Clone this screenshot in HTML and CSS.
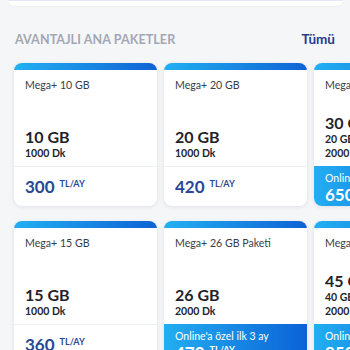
FILE: index.html
```html
<!DOCTYPE html>
<html lang="tr">
<head>
<meta charset="utf-8">
<title>Avantajlı Ana Paketler</title>
<link rel="stylesheet" href="styles.css">
</head>
<body>
<div class="top-strip"></div>
<header class="section-head">
  <h2 class="section-title">AVANTAJLI ANA PAKETLER</h2>
  <a class="see-all" href="#">Tümü</a>
</header>
<div class="grid">
  <div class="card">
    <div class="bar"></div>
    <div class="body">
      <div class="name">Mega+ 10 GB</div>
      <div class="specs">
        <div class="gb">10 GB</div>
        <div class="sub">1000 Dk</div>
      </div>
    </div>
    <div class="footer"><div class="price">300<sup class="unit">TL/AY</sup></div></div>
  </div>
  <div class="card">
    <div class="bar"></div>
    <div class="body">
      <div class="name">Mega+ 20 GB</div>
      <div class="specs">
        <div class="gb">20 GB</div>
        <div class="sub">1000 Dk</div>
      </div>
    </div>
    <div class="footer"><div class="price">420<sup class="unit">TL/AY</sup></div></div>
  </div>
  <div class="card">
    <div class="bar"></div>
    <div class="body">
      <div class="name">Mega+ 30 GB</div>
      <div class="specs">
        <div class="gb">30 GB</div>
        <div class="sub">20 GB + 10 GB Hediye</div>
        <div class="sub">2000 Dk</div>
      </div>
    </div>
    <div class="footer promo"><div class="promo-text">Online'a özel ilk 3 ay</div><div class="price">650<sup class="unit">TL/AY</sup></div></div>
  </div>
  <div class="card">
    <div class="bar"></div>
    <div class="body">
      <div class="name">Mega+ 15 GB</div>
      <div class="specs">
        <div class="gb">15 GB</div>
        <div class="sub">1000 Dk</div>
      </div>
    </div>
    <div class="footer"><div class="price">360<sup class="unit">TL/AY</sup></div></div>
  </div>
  <div class="card">
    <div class="bar"></div>
    <div class="body">
      <div class="name">Mega+ 26 GB Paketi</div>
      <div class="specs">
        <div class="gb">26 GB</div>
        <div class="sub">2000 Dk</div>
      </div>
    </div>
    <div class="footer promo"><div class="promo-text">Online'a özel ilk 3 ay</div><div class="price">470<sup class="unit">TL/AY</sup></div></div>
  </div>
  <div class="card">
    <div class="bar"></div>
    <div class="body">
      <div class="name">Mega+ 45 GB</div>
      <div class="specs">
        <div class="gb">45 GB</div>
        <div class="sub">40 GB + 5 GB Hediye</div>
        <div class="sub">2000 Dk</div>
      </div>
    </div>
    <div class="footer promo"><div class="promo-text">Online'a özel ilk 3 ay</div><div class="price">850<sup class="unit">TL/AY</sup></div></div>
  </div>
</div>
</body>
</html>
```

FILE: styles.css
```css
html, body {
  margin: 0;
  padding: 0;
}
body {
  width: 350px;
  height: 350px;
  overflow: hidden;
  background: #f5f6f8;
  font-family: "Lato", "Liberation Sans", sans-serif;
  color: #2a2d36;
}
.top-strip {
  margin: 0 7px 0 8px;
  height: 5px;
  background: #ffffff;
  border-top: 1px solid #e6e5fb;
  border-radius: 0 0 8px 8px;
  box-shadow: 0 1px 2px rgba(0, 0, 0, 0.04);
}
.section-head {
  display: flex;
  justify-content: space-between;
  align-items: center;
  padding: 0 15px 0 15px;
  margin-top: 25px;
  height: 16px;
}
.section-title {
  margin: 0;
  font-size: 12.5px;
  font-weight: 700;
  letter-spacing: 0.1px;
  color: #a2a7b4;
}
.see-all {
  font-size: 13.5px;
  font-weight: 700;
  color: #2b3a8e;
  text-decoration: none;
}
.grid {
  display: grid;
  grid-template-columns: repeat(3, 143px);
  column-gap: 7px;
  row-gap: 15px;
  padding-left: 14px;
  margin-top: 16px;
}
.card {
  height: 143px;
  background: #ffffff;
  border-radius: 8px;
  overflow: hidden;
  display: flex;
  flex-direction: column;
  box-shadow: 0 1px 4px rgba(20, 30, 60, 0.10);
}
.bar {
  height: 7px;
  flex: none;
  background: linear-gradient(90deg, #22b0f2 0%, #0f62d4 100%);
}
.body {
  flex: 1;
  display: flex;
  flex-direction: column;
  padding: 8px 11px 6px;
}
.name {
  font-size: 10.6px;
  line-height: 14px;
  color: #3a3d46;
}
.specs {
  margin-top: auto;
}
.gb {
  font-size: 16px;
  line-height: 19px;
  font-weight: 700;
  color: #1f222c;
}
.sub {
  font-size: 10.5px;
  line-height: 14px;
  font-weight: 700;
  color: #23262e;
}
.footer {
  height: 39px;
  flex: none;
  border-top: 1px solid #eef0f3;
  padding: 0 11px;
  display: flex;
  flex-direction: column;
  justify-content: center;
}
.footer.promo {
  border-top: none;
  height: 40px;
  background: linear-gradient(90deg, #22aef1 0%, #0c62d6 100%);
  color: #ffffff;
  justify-content: flex-start;
  padding-top: 5px;
  box-sizing: border-box;
}
.price {
  font-size: 17px;
  line-height: 20px;
  font-weight: 700;
  color: #2a4896;
}
.promo .price {
  color: #ffffff;
}
.unit {
  font-size: 9px;
  margin-left: 5px;
  vertical-align: 6px;
  line-height: 0;
}
.promo-text {
  font-size: 10.5px;
  line-height: 14px;
  color: #ffffff;
}
```
